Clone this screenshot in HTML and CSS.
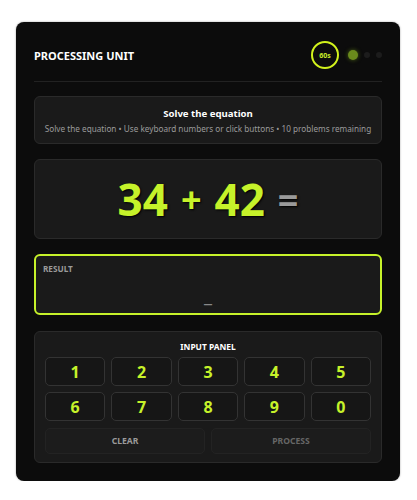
FILE: index.html
```html
<!DOCTYPE html>
<html lang="en">
<head>
    <meta charset="UTF-8">
    <meta name="viewport" content="width=device-width, initial-scale=1.0">
    <title>Processing Unit</title>
    <link rel="stylesheet" href="styles.css">
</head>
<body>

<div class="unit">
    <div class="header">
        <h1>PROCESSING UNIT</h1>
        <div class="status">
            <div class="timer">60s</div>
            <span class="dot active"></span>
            <span class="dot"></span>
            <span class="dot"></span>
        </div>
    </div>

    <div class="box task">
        <div class="task-title">Solve the equation</div>
        <div class="task-sub">Solve the equation • Use keyboard numbers or click buttons • 10 problems remaining</div>
    </div>

    <div class="box equation">
        <span class="num">34</span>
        <span class="op">+</span>
        <span class="num">42</span>
        <span class="eq">=</span>
    </div>

    <div class="box result">
        <div class="result-label">RESULT</div>
        <div class="result-value">_</div>
    </div>

    <div class="box panel">
        <div class="panel-title">INPUT PANEL</div>
        <div class="keys">
            <button class="key">1</button>
            <button class="key">2</button>
            <button class="key">3</button>
            <button class="key">4</button>
            <button class="key">5</button>
            <button class="key">6</button>
            <button class="key">7</button>
            <button class="key">8</button>
            <button class="key">9</button>
            <button class="key">0</button>
        </div>
        <div class="actions">
            <button class="action">CLEAR</button>
            <button class="action disabled">PROCESS</button>
        </div>
    </div>
</div>

</body>
</html>
```

FILE: styles.css
```css
/* Dark panel with lime accents */
body {
    margin: 0;
    background-color: #fff;
    font-family: 'Noto Sans', 'Open Sans', sans-serif;
    color: #e0e0e0;
}
.unit {
    width: 384px;
    box-sizing: border-box;
    margin: 22px 0 0 16px;
    padding: 0 18px 18px;
    background-color: #0c0c0c;
    border-radius: 8px;
    box-shadow: 0 0 2px rgba(0, 0, 0, 0.4);
}
.header {
    display: flex;
    justify-content: space-between;
    align-items: center;
    padding: 19px 0 12px;
    border-bottom: 1px solid #222;
}
h1 {
    margin: 0;
    font-size: 11px;
    font-weight: 700;
    color: #fff;
}
.status {
    display: flex;
    align-items: center;
    gap: 6px;
}
.timer {
    width: 24px;
    height: 24px;
    border: 2px solid #d2f21c;
    border-radius: 50%;
    display: flex;
    align-items: center;
    justify-content: center;
    font-size: 7px;
    font-weight: 700;
    color: #c9ec2a;
    margin-right: 3px;
}
.dot {
    width: 6px;
    height: 6px;
    border-radius: 50%;
    background-color: #1c1c1c;
}
.dot.active {
    width: 10px;
    height: 10px;
    background-color: #6a8a1c;
    box-shadow: 0 0 4px rgba(140, 190, 30, 0.5);
}
.box {
    background-color: #1a1a1a;
    border: 1px solid #2a2a2a;
    border-radius: 6px;
    margin-top: 15px;
    box-sizing: border-box;
}
.task {
    margin-top: 14px;
    height: 48px;
    text-align: center;
    padding-top: 10px;
}
.task-title {
    font-size: 9.6px;
    font-weight: 700;
    color: #fff;
}
.task-sub {
    font-size: 8.2px;
    color: #9a9a9a;
    margin-top: 3px;
    white-space: nowrap;
}
.equation {
    height: 80px;
    display: flex;
    align-items: center;
    justify-content: center;
    gap: 13px;
    font-weight: 700;
}
.num {
    font-size: 44px;
    color: #c6f22a;
    text-shadow: 1px 1px 2px #000;
}
.op {
    font-size: 36px;
    color: #c6f22a;
    text-shadow: 1px 1px 2px #000;
}
.eq {
    font-size: 36px;
    color: #9a9a9a;
    text-shadow: 1px 1px 2px #000;
}
.result {
    height: 61px;
    border: 2px solid #c6f22a;
    padding: 7px 7px 0;
}
.result-label {
    font-size: 8.2px;
    font-weight: 700;
    color: #9a9a9a;
}
.result-value {
    text-align: center;
    font-size: 18px;
    color: #888;
    margin-top: 9px;
}
.panel {
    margin-top: 16px;
    height: 132px;
    padding: 9px 10px 0;
}
.panel-title {
    text-align: center;
    font-size: 8.4px;
    font-weight: 700;
    color: #fff;
}
.keys {
    display: grid;
    grid-template-columns: repeat(5, 1fr);
    gap: 6px 6px;
    margin-top: 5px;
}
button {
    font-family: inherit;
    cursor: pointer;
}
.key {
    height: 29px;
    background-color: #161616;
    border: 1px solid #333;
    border-radius: 5px;
    color: #c6f22a;
    font-size: 16px;
    font-weight: 700;
    padding: 0;
}
.actions {
    display: grid;
    grid-template-columns: 1fr 1fr;
    gap: 6px;
    margin-top: 7px;
}
.action {
    height: 26px;
    background-color: #1c1c1c;
    border: 1px solid #232323;
    border-radius: 5px;
    color: #9a9a9a;
    font-size: 8.6px;
    font-weight: 700;
    padding: 0;
}
.action.disabled {
    color: #666;
}
```
